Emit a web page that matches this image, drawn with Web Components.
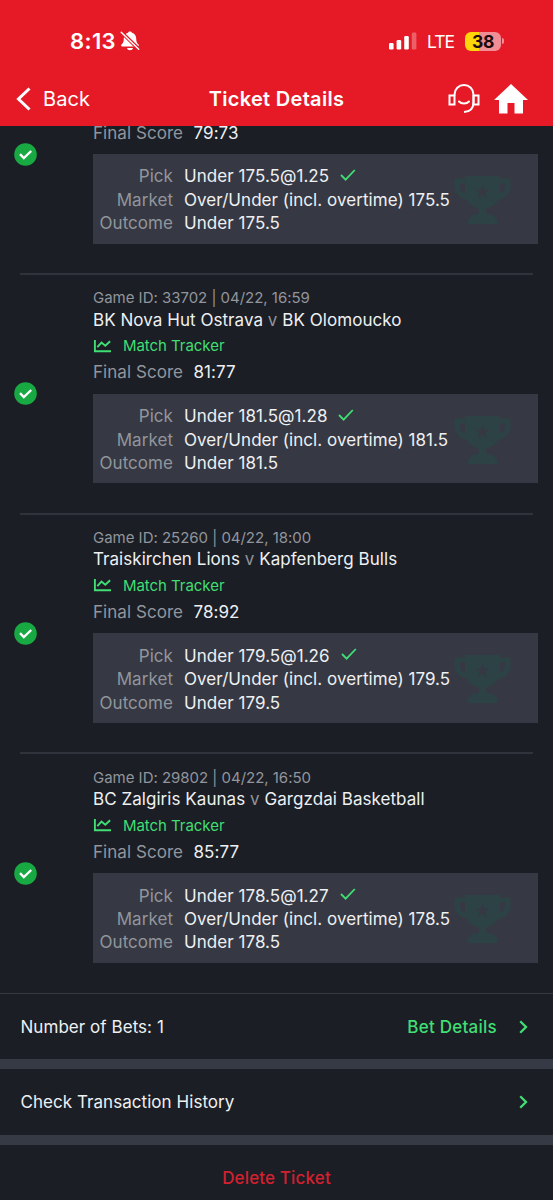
<!DOCTYPE html>
<html lang="en">
<head>
<meta charset="UTF-8">
<title>Ticket Details</title>
<style>
    body {
        margin: 0;
        height: 1200px;
        overflow: hidden;
        background: #1b1e25;
        color: #eef0f2;
        font-family: Inter, "Liberation Sans", sans-serif;
        font-size: 17px;
        letter-spacing: 0.05px;
        --red: #e61a27;
        --green: #40de74;
        --panel: #363943;
        --muted: #92959c;
    }
</style>
</head>
<body>
<ticket-app></ticket-app>

<script>
// Status bar: clock, signal and battery
class StatusBar extends HTMLElement {
    constructor() {
        super();
        this.attachShadow({ mode: 'open' });
        this.shadowRoot.innerHTML = `
            <style>
                :host {
                    display: flex;
                    align-items: center;
                    height: 72px;
                    box-sizing: border-box;
                    padding: 10px 49px 0 70px;
                }
                .time { font-size: 22px; font-weight: 600; letter-spacing: 0.4px; width: 50px; white-space: nowrap; }
                .signal { margin-left: auto; }
                .lte { font-size: 17.5px; letter-spacing: -1px; margin: 0 11px 0 10px; width: 27px; white-space: nowrap; }
                .battery {
                    display: flex;
                    align-items: center;
                    justify-content: center;
                    width: 36px;
                    height: 19px;
                    border-radius: 6px;
                    background: linear-gradient(to right, #ffd60a 14px, #f18d95 14px);
                    color: #1a0b0c;
                    font-size: 17.5px;
                    letter-spacing: -0.4px;
                    font-weight: 700;
                }
                .nub { width: 2px; height: 6px; margin-left: 1px; border-radius: 0 2px 2px 0; background: #f18d95; }
                svg { display: block; }
            </style>
            <span class="time">8:13</span>
            <svg width="20" height="20" viewBox="0 0 20 20">
                <path fill="#fff" d="M10 .5c1 0 1.700.5 1.900 1.300 2.800.8 4.300 3 4.300 5.700 0 3.800 1 4.800 2.300 6.100.8.8.3 2-.8 2H2.300c-1.100 0-1.600-1.200-.8-2 1.300-1.300 2.300-2.300 2.300-6.100 0-2.700 1.500-4.900 4.300-5.700C8.300 1 9 .5 10 .5zM7 17h6c-.3 1.500-1.500 2.200-3 2.200s-2.700-.7-3-2.200z"/>
                <path stroke="#e61a27" stroke-width="3.600" d="M1 .8 19 18.400"/>
                <path stroke="#fff" stroke-width="1.500" stroke-linecap="round" d="M1.200 1.200 18.700 18.200"/>
            </svg>
            <svg class="signal" width="28" height="18" viewBox="0 0 28 18" fill="#fff">
                <rect x="0" y="11" width="4.600" height="6.500" rx="1.300"/>
                <rect x="7.600" y="8" width="4.600" height="9.500" rx="1.300"/>
                <rect x="15.200" y="4" width="4.600" height="13.500" rx="1.300"/>
                <rect x="22.800" y="0.500" width="4.600" height="17" rx="1.300" opacity=".3"/>
            </svg>
            <span class="lte">LTE</span>
            <span class="battery">38</span>
            <span class="nub"></span>
        `;
    }
}
customElements.define('status-bar', StatusBar);

// Navigation bar with back link, title and shortcuts
class NavBar extends HTMLElement {
    constructor() {
        super();
        this.attachShadow({ mode: 'open' });
        this.shadowRoot.innerHTML = `
            <style>
                :host {
                    display: grid;
                    grid-template-columns: 1fr auto 1fr;
                    align-items: center;
                    height: 54px;
                    padding: 0 16px;
                }
                .back { display: flex; align-items: center; gap: 12px; font-size: 20px; }
                .title { font-size: 20px; font-weight: 600; letter-spacing: 0.3px; white-space: nowrap; }
                .icons { display: flex; justify-content: flex-end; align-items: center; gap: 14px; padding-right: 9px; }
                svg { display: block; }
            </style>
            <div class="back">
                <svg width="15" height="24" viewBox="0 0 15 24" fill="none" stroke="#fff" stroke-width="3">
                    <path d="M13.500 1.500 2.500 12 13.500 22.500"/>
                </svg>
                <span class="label"><slot name="back"></slot></span>
            </div>
            <div class="title"><slot></slot></div>
            <div class="icons">
                <svg width="32" height="30" viewBox="0 0 32 30" fill="none" stroke="#fff" stroke-width="2">
                    <path d="M6.500 11.500h-5v9h5zM25.500 11.500h5v9h-5z"/>
                    <path d="M6.500 11.500V10.500a9.500 9.500 0 0 1 19 0V18c0 6-3.500 9.700-9.500 10"/>
                    <path stroke-linecap="round" d="M11 17.500c2.500 2.700 7.500 2.700 10 0"/>
                </svg>
                <svg width="34" height="30" viewBox="0 0 34 30" fill="#fff">
                    <path d="M17 0 34 16h-5v13.500h-8.500V19h-7v10.500H5V16H0z"/>
                </svg>
            </div>
        `;
    }
}
customElements.define('nav-bar', NavBar);

// One selection of the ticket: game info plus the panel with the pick
class BetSelection extends HTMLElement {
    constructor() {
        super();
        this.attachShadow({ mode: 'open' });
        this.shadowRoot.innerHTML = `
            <style>
                :host {
                    display: grid;
                    grid-template-columns: 73px minmax(0, 1fr);
                    align-items: center;
                    height: 239.7px;
                    box-sizing: border-box;
                    margin: 0 20px;
                    border-bottom: 2px solid #30333b;
                }
                :host(:last-of-type) { border-bottom-color: transparent; }
                .status { display: block; margin-left: -6px; }
                .info {
                    display: grid;
                    grid-template-columns: minmax(0, 1fr);
                    grid-template-rows: 21px 23px 29px 24px 99px;
                    align-content: start;
                    align-items: center;
                    height: 213px;
                    margin-right: -5px;
                    white-space: nowrap;
                }
                .game { grid-row: 1; font-size: 15px; letter-spacing: -0.02px; color: var(--muted); }
                .teams { grid-row: 2; }
                .tracker { grid-row: 3; display: flex; align-items: center; gap: 11px; font-size: 15px; letter-spacing: -0.05px; color: var(--green); }
                .score { grid-row: 4; display: flex; gap: 10.5px; }
                .score b { font-weight: 400; color: var(--muted); }
                .panel {
                    grid-row: 5;
                    align-self: end;
                    display: grid;
                    grid-template-columns: 80px minmax(0, 1fr) 57px;
                    grid-template-rows: repeat(3, 23.4px);
                    align-content: center;
                    align-items: center;
                    column-gap: 11px;
                    height: 89.5px;
                    box-sizing: border-box;
                    padding: 2px 27px 0 0;
                    background: var(--panel);
                }
                .panel b { grid-column: 1; font-weight: 400; color: var(--muted); text-align: right; }
                .panel span { grid-column: 2; }
                .panel svg.cup { grid-column: 3; grid-row: 1 / 4; }
                .pick { display: flex; align-items: center; gap: 11px; }
                .pick svg { margin-top: -3px; }
                ::slotted([slot=teams]) { white-space: pre; }
            </style>
            <svg class="status" width="23" height="23" viewBox="0 0 23 23">
                <circle cx="11.500" cy="11.500" r="11.300" fill="#18a943"/>
                <path fill="none" stroke="#fff" stroke-width="2.400" d="M6 11.200l3.800 3.800L17.200 8"/>
            </svg>
            <div class="info">
                <div class="game"><slot name="game"></slot></div>
                <div class="teams"><slot name="teams"></slot></div>
                <div class="tracker"></div>
                <div class="score"><b>Final Score</b><span><slot name="score"></slot></span></div>
                <div class="panel">
                    <b>Pick</b>
                    <span class="pick"><slot name="pick"></slot>
                        <svg width="16" height="12" viewBox="0 0 16 12" fill="none" stroke="#40de74" stroke-width="1.800">
                            <path d="M1 6l4.600 4.600L14.800 1"/>
                        </svg>
                    </span>
                    <b>Market</b><span><slot name="market"></slot></span>
                    <b>Outcome</b><span><slot name="outcome"></slot></span>
                    <svg class="cup" width="57" height="50" viewBox="0 0 57 50">
                        <path fill="#2c4244" fill-rule="evenodd" d="M11 1h35v2.500h10.500v8c0 7-5 12-12 13C42 29 37.500 32.500 32 33.500V39c5 0 8.500 1.500 9.500 5h1.500v5H14v-5h1.500c1-3.500 4.500-5 9.500-5v-5.500C19.500 32.500 15 29 12.500 24.500c-7-1-12-6-12-13v-8H11zM6 8.500v4c0 3 1.500 5 5 6v-10zM46 8.500v10c3.500-1 5-3 5-6v-4zM28.500 9.500l-1.900 5h-5.200l4.200 3.300-1.600 5.200 4.500-3.100 4.500 3.100-1.600-5.200 4.200-3.300h-5.200z"/>
                    </svg>
                </div>
            </div>
        `;
    }

    // The tracker link is shown only for games that have one
    connectedCallback() {
        if (this.hasAttribute('tracker')) {
            this.shadowRoot.querySelector('.tracker').innerHTML = `
                <svg width="19" height="14" viewBox="0 0 19 14" fill="none" stroke="#40de74" stroke-width="1.900">
                    <path d="M1.900 1v11.200H18"/>
                    <path d="M4.300 8.200l4.200-4.600 3.800 3.200 4.800-4.600"/>
                </svg>
                <span>Match Tracker</span>
            `;
        }
    }
}
customElements.define('bet-selection', BetSelection);

// Row with a label, an optional link and a chevron
class TicketRow extends HTMLElement {
    constructor() {
        super();
        this.attachShadow({ mode: 'open' });
        this.shadowRoot.innerHTML = `
            <style>
                :host {
                    display: flex;
                    align-items: center;
                    height: 65.3px;
                    padding: 0 25px 0 20.5px;
                    border-bottom: 10px solid #363a44;
                }
                .link { margin-left: auto; margin-right: 22px; color: var(--green); font-weight: 500; letter-spacing: 0.25px; }
            </style>
            <span class="label"><slot></slot></span>
            <span class="link"><slot name="link"></slot></span>
            <svg width="9" height="14" viewBox="0 0 9 14" fill="none" stroke="#40de74" stroke-width="2.300">
                <path d="M1.200 1.200 7 7 1.200 12.800"/>
            </svg>
        `;
    }
}
customElements.define('ticket-row', TicketRow);

const selections = [
    { score: '79:73', pick: '175.5', odds: '1.25' },
    { game: 'Game ID: 33702 | 04/22, 16:59', home: 'BK Nova Hut Ostrava', away: 'BK Olomoucko', score: '81:77', pick: '181.5', odds: '1.28' },
    { game: 'Game ID: 25260 | 04/22, 18:00', home: 'Traiskirchen Lions', away: 'Kapfenberg Bulls', score: '78:92', pick: '179.5', odds: '1.26' },
    { game: 'Game ID: 29802 | 04/22, 16:50', home: 'BC Zalgiris Kaunas', away: 'Gargzdai Basketball', score: '85:77', pick: '178.5', odds: '1.27' }
];

const selectionHtml = s => `
    <bet-selection ${s.game ? 'tracker' : ''}>
        ${s.game ? `<span slot="game">${s.game}</span>
        <span slot="teams">${s.home} <i>v</i> ${s.away}</span>` : ''}
        <span slot="score">${s.score}</span>
        <span slot="pick">Under ${s.pick}@${s.odds}</span>
        <span slot="market">Over/Under (incl. overtime) ${s.pick}</span>
        <span slot="outcome">Under ${s.pick}</span>
    </bet-selection>
`;

class TicketApp extends HTMLElement {
    constructor() {
        super();
        this.attachShadow({ mode: 'open' });
        this.shadowRoot.innerHTML = `
            <style>
                :host { display: flex; flex-direction: column; height: 1200px; }
                header { background: var(--red); color: #fff; height: 126px; flex: none; }
                /* the list is scrolled partly under the header */
                .list {
                    display: flex;
                    flex-direction: column;
                    justify-content: flex-end;
                    height: 867px;
                    flex: none;
                    overflow: hidden;
                    border-bottom: 1px solid #363942;
                }
                bet-selection { flex: none; }
                bet-selection:last-child { margin-bottom: -1px; }
                i { font-style: normal; color: var(--muted); }
                .delete { text-align: center; color: #d3202f; padding-top: 23px; font-weight: 500; letter-spacing: 0.15px; }
            </style>
            <header>
                <status-bar></status-bar>
                <nav-bar><span slot="back">Back</span>Ticket Details</nav-bar>
            </header>
            <div class="list">${selections.map(selectionHtml).join('')}</div>
            <ticket-row>Number of Bets: 1<span slot="link">Bet Details</span></ticket-row>
            <ticket-row>Check Transaction History</ticket-row>
            <div class="delete">Delete Ticket</div>
        `;
    }
}
customElements.define('ticket-app', TicketApp);
</script>
</body>
</html>
